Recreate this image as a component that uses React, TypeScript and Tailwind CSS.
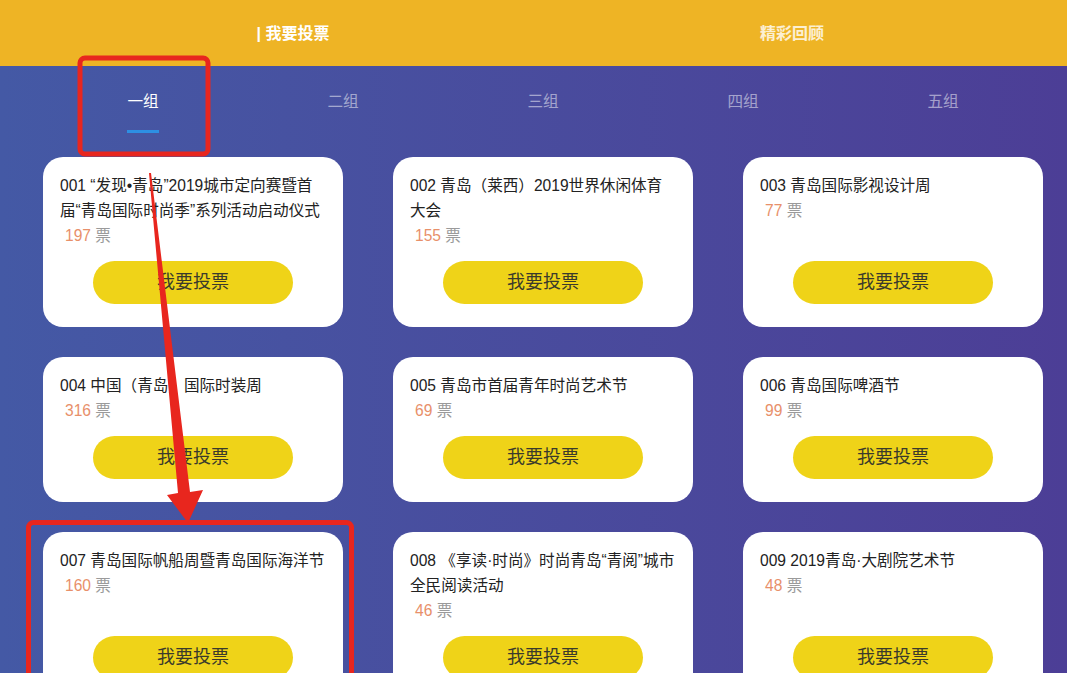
import React from "react";

type Entry = {
  lines: string[];
  votes: number;
};

const entries: Entry[] = [
  { lines: ["001 “发现•青岛”2019城市定向赛暨首", "届“青岛国际时尚季”系列活动启动仪式"], votes: 197 },
  { lines: ["002 青岛（莱西）2019世界休闲体育", "大会"], votes: 155 },
  { lines: ["003 青岛国际影视设计周"], votes: 77 },
  { lines: ["004 中国（青岛）国际时装周"], votes: 316 },
  { lines: ["005 青岛市首届青年时尚艺术节"], votes: 69 },
  { lines: ["006 青岛国际啤酒节"], votes: 99 },
  { lines: ["007 青岛国际帆船周暨青岛国际海洋节"], votes: 160 },
  { lines: ["008 《享读·时尚》时尚青岛“青阅”城市", "全民阅读活动"], votes: 46 },
  { lines: ["009 2019青岛·大剧院艺术节"], votes: 48 },
];

const groups = ["一组", "二组", "三组", "四组", "五组"];

export default function App() {
  return (
    <div
      className="relative h-screen w-full overflow-hidden bg-linear-to-r from-[#4459A5] to-[#4C3E96]"
      style={{ fontFamily: '"Liberation Sans", "Noto Sans CJK SC", sans-serif' }}
    >
      <header className="grid h-[66px] grid-cols-[586px_412px] items-center bg-[#EEB425]">
        <span className="pt-[2px] text-center text-[16px] font-bold text-white">| 我要投票</span>
        <span className="pt-[2px] text-center text-[16px] font-bold text-white/80">精彩回顾</span>
      </header>

      <nav className="ml-[43px] grid w-[1000px] grid-cols-5 pt-[25px]">
        {groups.map((group, index) => (
          <div key={group} className="flex flex-col items-center">
            <span
              className={`text-[15.6px] leading-[22px] ${
                index === 0 ? "text-white" : "text-white/50"
              }`}
            >
              {group}
            </span>
            <span
              className={`mt-[17px] h-[3px] w-[32px] ${
                index === 0 ? "bg-[#2D8FE3]" : "bg-transparent"
              }`}
            />
          </div>
        ))}
      </nav>

      <main className="mt-[24px] ml-[43px] grid w-[1000px] grid-cols-3 gap-x-[50px] gap-y-[30px] pb-10">
        {entries.map((entry) => (
          <div
            key={entry.lines[0]}
            className="flex flex-col rounded-[20px] bg-white px-[17px] pt-[16px] pb-[23px]"
          >
            {entry.lines.map((line) => (
              <p key={line} className="whitespace-nowrap text-[15.6px] leading-[25px] text-[#222]">
                {line}
              </p>
            ))}
            <p className="pl-[5px] text-[15.6px] leading-[25px]">
              <span className="text-[#E8906A]">{entry.votes}</span>
              <span className="text-[#9a9a9a]"> 票</span>
            </p>
            <div className="mt-auto pt-[13px]">
              <button
                type="button"
                className="mx-auto flex h-[43px] w-[200px] items-center justify-center rounded-full bg-[#EFD318] text-[18px] text-[#3a3a2c]"
              >
                我要投票
              </button>
            </div>
          </div>
        ))}
      </main>

      {/* red annotation marks */}
      <svg
        className="pointer-events-none absolute top-0 left-0"
        width="1067"
        height="673"
        viewBox="0 0 1067 673"
      >
        <rect x="80" y="58" width="128" height="96" rx="5" fill="none" stroke="#E8261E" strokeWidth="5" />
        <rect x="28.5" y="522.5" width="323" height="200" rx="5" fill="none" stroke="#E8261E" strokeWidth="5" />
        <polygon
          points="149,173 151,173 190,492 203,490 188,523 167,495 178,493"
          fill="#E8261E"
        />
      </svg>
    </div>
  );
}
